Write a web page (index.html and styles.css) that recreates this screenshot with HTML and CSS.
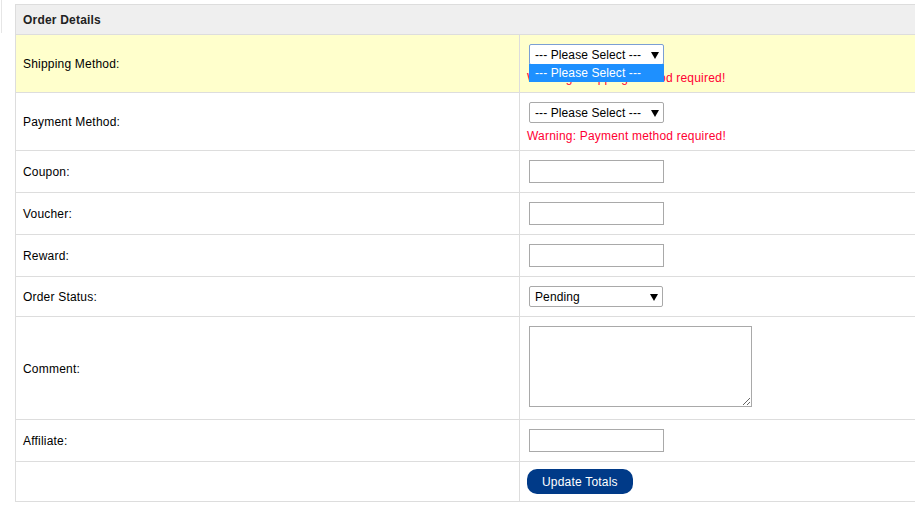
FILE: index.html
```html
<!DOCTYPE html>
<html>
<head>
<meta charset="utf-8">
<link rel="stylesheet" href="styles.css">
</head>
<body>
<div class="edge"></div>
<table class="list">
  <colgroup>
    <col class="col-label">
    <col class="col-field">
  </colgroup>
  <thead>
    <tr><td colspan="2" class="head">Order Details</td></tr>
  </thead>
  <tbody>
    <tr class="hover">
      <td class="label">Shipping Method:</td>
      <td class="field">
        <div class="select focus">
          <span class="sel-text">--- Please Select ---</span>
          <svg class="arrow" width="8" height="7" viewBox="0 0 8 7"><polygon points="0,0 8,0 4,7" fill="#000"/></svg>
          <div class="dropdown">--- Please Select ---</div>
        </div>
        <div class="error">Warning: Shipping method required!</div>
      </td>
    </tr>
    <tr>
      <td class="label">Payment Method:</td>
      <td class="field">
        <div class="select">
          <span class="sel-text">--- Please Select ---</span>
          <svg class="arrow" width="8" height="7" viewBox="0 0 8 7"><polygon points="0,0 8,0 4,7" fill="#000"/></svg>
        </div>
        <div class="error">Warning: Payment method required!</div>
      </td>
    </tr>
    <tr>
      <td class="label">Coupon:</td>
      <td class="field"><input class="text" type="text"></td>
    </tr>
    <tr>
      <td class="label">Voucher:</td>
      <td class="field"><input class="text" type="text"></td>
    </tr>
    <tr>
      <td class="label">Reward:</td>
      <td class="field"><input class="text" type="text"></td>
    </tr>
    <tr>
      <td class="label">Order Status:</td>
      <td class="field">
        <div class="select status">
          <span class="sel-text">Pending</span>
          <svg class="arrow" width="8" height="7" viewBox="0 0 8 7"><polygon points="0,0 8,0 4,7" fill="#000"/></svg>
        </div>
      </td>
    </tr>
    <tr>
      <td class="label">Comment:</td>
      <td class="field"><textarea class="comment"></textarea></td>
    </tr>
    <tr>
      <td class="label">Affiliate:</td>
      <td class="field"><input class="text" type="text"></td>
    </tr>
    <tr>
      <td class="label"></td>
      <td class="field"><a class="button">Update Totals</a></td>
    </tr>
  </tbody>
</table>
</body>
</html>
```

FILE: styles.css
```css
html, body {
  overflow: hidden;
}
body {
  margin: 0;
  display: flex;
  align-items: flex-start;
  font-family: "Liberation Sans", Arial, sans-serif;
  font-size: 12px;
  letter-spacing: 0.2px;
  color: #000;
  background: #fff;
}
.edge {
  flex: 0 0 1px;
  width: 1px;
  height: 33px;
  margin-left: 1px;
  background: #e6e6e6;
}
.list {
  flex: 0 0 auto;
  margin: 4px 0 0 13px;
  width: 1000px;
  table-layout: fixed;
  border-collapse: collapse;
  border-top: 1px solid #dddddd;
  border-left: 1px solid #dddddd;
}
.col-label { width: 504px; }
.list td {
  border-bottom: 1px solid #dddddd;
  border-right: 1px solid #dddddd;
  padding: 7px;
  line-height: 15px;
}
.list td.head {
  padding: 8px 7px 6px;
  background: #efefef;
  color: #222222;
  font-weight: bold;
}
.list td.label {
  vertical-align: middle;
  padding-top: 8px;
  padding-bottom: 6px;
}
.list td.field {
  vertical-align: top;
}
.list tr.hover td {
  background: #ffffcc;
}
.select {
  position: relative;
  box-sizing: border-box;
  width: 135px;
  height: 21px;
  margin: 2px;
  padding: 2px 4px 0 5px;
  display: flex;
  align-items: center;
  justify-content: space-between;
  background: #fff;
  border: 1px solid #a9a9a9;
  border-radius: 2px;
  line-height: 17px;
  letter-spacing: 0.1px;
}
.select.focus {
  border-color: #7b9fd4;
}
.select.status {
  width: 134px;
}
.sel-text {
  white-space: nowrap;
}
.arrow {
  display: block;
}
.dropdown {
  position: absolute;
  left: -1px;
  top: 100%;
  width: 135px;
  box-sizing: border-box;
  height: 18px;
  padding: 1px 0 0 6px;
  line-height: 17px;
  background: #1e90ff;
  color: #fff;
  white-space: nowrap;
}
.error {
  margin-top: 6px;
  margin-bottom: -1px;
  color: #ff0033;
}
.text {
  display: block;
  box-sizing: border-box;
  width: 135px;
  height: 23px;
  margin: 2px;
  padding: 1px 2px;
  border: 1px solid #a9a9a9;
  border-radius: 0;
  font: inherit;
  background: #fff;
}
.comment {
  display: block;
  box-sizing: border-box;
  width: 223px;
  height: 81px;
  margin: 2px 2px 5px 2px;
  border: 1px solid #a9a9a9;
  border-radius: 0;
  font: inherit;
}
.button {
  display: inline-block;
  vertical-align: top;
  height: 25px;
  box-sizing: border-box;
  padding: 6px 15px 4px;
  line-height: 15px;
  background: #003a88;
  color: #fff;
  border-radius: 10px;
  text-decoration: none;
  white-space: nowrap;
}
```
